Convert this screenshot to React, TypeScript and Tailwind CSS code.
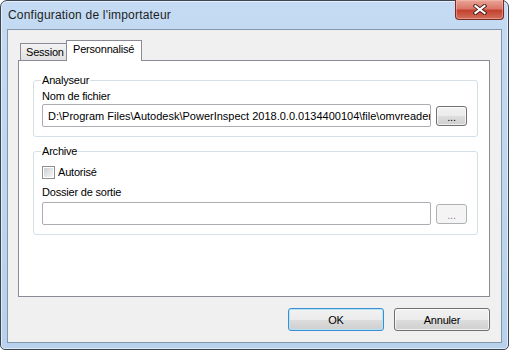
import React from "react";

const btnFace =
  "bg-[linear-gradient(to_bottom,#f2f2f2_0%,#ebebeb_50%,#dddddd_51%,#cfcfcf_100%)]";

function Browse({ disabled }: { disabled?: boolean }) {
  return (
    <button
      disabled={disabled}
      className={
        disabled
          ? "h-[20px] w-[31px] rounded-[3px] border border-[#adb2b5] bg-[#f4f4f4] pt-[2px] text-[11px] leading-[16px] text-[#8a8a9a]"
          : `h-[20px] w-[31px] rounded-[3px] border border-[#707070] ${btnFace} pt-[2px] text-[11px] leading-[16px] text-black shadow-[inset_0_0_0_1px_rgba(255,255,255,0.7)]`
      }
    >
      ...
    </button>
  );
}

function TextBox({ value }: { value?: string }) {
  return (
    <input
      readOnly
      value={value ?? ""}
      className="h-[23px] min-w-0 flex-1 rounded-[2px] border border-[#abadb3] bg-white pl-[5px] text-[11px] tracking-normal text-black outline-none"
    />
  );
}

function Group({ legend, children, className }: { legend: string; children: React.ReactNode; className?: string }) {
  return (
    <fieldset className={`rounded-[3px] border border-[#d5dfe5] pb-[9px] pl-[8px] pr-[10px] ${className ?? ""}`}>
      <legend className="-ml-px px-px leading-[15px]">{legend}</legend>
      {children}
    </fieldset>
  );
}

export default function App() {
  return (
    <div className="h-[350px] w-[509px] bg-white font-['Liberation_Sans',Arial,sans-serif] text-[11px] tracking-[-0.2px] text-black">
      <div className="flex h-full flex-col rounded-t-[7px] rounded-b-[5px] border border-[#3c4650] bg-linear-to-b from-[#c4dbf3] to-[#b8d1ec] shadow-[inset_0_0_0_1px_rgba(255,255,255,0.55)]">
        {/* title bar */}
        <div className="flex h-[28px] shrink-0 items-start">
          <div className="pl-[7px] pt-[7px] text-[12px] leading-[15px] tracking-[0.2px] text-[#1e1e1e]">
            Configuration de l'importateur
          </div>
          <div className="-mt-px ml-auto mr-[4px] flex h-[20px] w-[49px] items-center justify-center rounded-b-[4px] border border-t-0 border-[#7a2b22] bg-[linear-gradient(to_bottom,#e9a597_0%,#d9786a_45%,#c5412e_55%,#d0705c_100%)] shadow-[inset_0_0_0_1px_rgba(255,200,190,0.45)]">
            <svg width="14" height="11" viewBox="0 0 14 11">
              <path d="M2.5 2 L11.5 9 M11.5 2 L2.5 9" stroke="#4a1a14" strokeWidth="4" strokeLinecap="square" />
              <path d="M2.5 2 L11.5 9 M11.5 2 L2.5 9" stroke="#ffffff" strokeWidth="2.2" strokeLinecap="square" />
            </svg>
          </div>
        </div>

        {/* client area */}
        <div className="mx-[6px] mb-[6px] flex flex-1 flex-col border border-[#8397ab] bg-[#f0f0f0]">
          <div className="pl-[10px] pr-[11px] pt-[10px]">
            <div className="relative z-10 flex h-[20px] items-end pl-[2px]">
              <div className="h-[17px] w-[47px] border-x border-t border-[#898c95] bg-linear-to-b from-[#f3f3f3] to-[#e1e1e1] pl-[5px] leading-[16px]">
                Session
              </div>
              <div className="-mb-px -ml-px h-[21px] w-[76px] border-x border-t border-[#898c95] bg-white pl-[6px] pt-[1px] leading-[15px]">
                Personnalisé
              </div>
            </div>
            <div className="h-[237px] border border-[#898c95] bg-white pl-[14px] pr-[11px] pt-[12px]">
              <Group legend="Analyseur">
                <div className="leading-[16px]">Nom de fichier</div>
                <div className="flex items-center gap-[5px]">
                  <TextBox value={"D:\\Program Files\\Autodesk\\PowerInspect 2018.0.0.0134400104\\file\\omvreader.dll"} />
                  <Browse />
                </div>
              </Group>
              <Group legend="Archive" className="mt-[7px]">
                <div className="mt-[7px] flex h-[13px] items-center">
                  <div className="flex h-[13px] w-[13px] items-center justify-center border border-[#8e8f8f] bg-white">
                    <div className="h-[9px] w-[9px] bg-linear-to-br from-[#cbcfd5] to-[#f7f7f7]" />
                  </div>
                  <span className="ml-[3px] leading-[15px]">Autorisé</span>
                </div>
                <div className="mt-[6px] leading-[15px]">Dossier de sortie</div>
                <div className="mt-[2px] flex items-center gap-[5px]">
                  <TextBox />
                  <Browse disabled />
                </div>
              </Group>
            </div>
          </div>
          <div className="mt-[11px] flex justify-end gap-[10px] pr-[11px]">
            <button className={`h-[23px] w-[96px] rounded-[3px] border border-[#3c8fce] ${btnFace} leading-[16px] shadow-[inset_0_0_0_1px_#b6e3f8]`}>
              OK
            </button>
            <button className={`h-[23px] w-[96px] rounded-[3px] border border-[#707070] ${btnFace} leading-[16px] shadow-[inset_0_0_0_1px_rgba(255,255,255,0.7)]`}>
              Annuler
            </button>
          </div>
        </div>
      </div>
    </div>
  );
}
